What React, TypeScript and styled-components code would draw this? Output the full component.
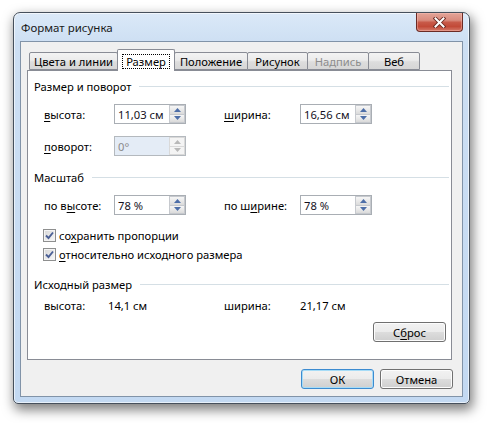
import React from "react";
import styled, { createGlobalStyle } from "styled-components";

const Global = createGlobalStyle`
  html, body { margin: 0; padding: 0; background: #ffffff; }
  body {
    font-family: "Noto Sans", "Open Sans", "DejaVu Sans", sans-serif;
    font-size: 11.2px;
    color: #000000;
  }
  * { box-sizing: border-box; }
`;

const Page = styled.div`
  width: 487px;
  height: 423px;
  padding: 12px 0 0 13px;
`;

const Window = styled.div`
  width: 457px;
  height: 392px;
  border: 1px solid #46505c;
  border-radius: 7px 7px 5px 5px;
  background: linear-gradient(to bottom, #dbe9f8 0px, #cddff3 30px, #c3d9f2 100%);
  box-shadow: 2px 5px 12px 1px rgba(0, 0, 0, 0.5), inset 0 0 0 1px rgba(255, 255, 255, 0.6);
  display: flex;
  flex-direction: column;
  padding: 0 6px 6px 6px;
`;

const TitleBar = styled.div`
  height: 28px;
  display: flex;
  align-items: center;
  justify-content: space-between;
`;

const Title = styled.div`
  padding-left: 1px;
  color: #1a1a1a;
  font-size: 11.5px;
`;

const CloseButton = styled.div`
  align-self: flex-start;
  width: 47px;
  height: 19px;
  border: 1px solid #6b2b25;
  border-top: none;
  border-radius: 0 0 4px 4px;
  background: linear-gradient(
    to bottom,
    #e3a498 0%,
    #d98c7e 40%,
    #c85a49 52%,
    #c24a38 75%,
    #d47a6a 100%
  );
  box-shadow: inset 0 0 0 1px rgba(255, 200, 190, 0.4);
  display: flex;
  align-items: center;
  justify-content: center;
`;

const Client = styled.div`
  flex: 1;
  border: 1px solid #8193a8;
  background: #f0f0f0;
  padding: 7px 10px 0 6px;
  display: flex;
  flex-direction: column;
`;

const TabRow = styled.div`
  height: 21px;
  padding-left: 2px;
  display: flex;
  align-items: flex-end;
`;

const Tab = styled.div<{ $w: number; $active?: boolean; $disabled?: boolean }>`
  width: ${(p) => p.$w}px;
  height: ${(p) => (p.$active ? 22 : 18)}px;
  margin-left: -1px;
  margin-bottom: ${(p) => (p.$active ? -1 : 0)}px;
  &:first-child { margin-left: 0; }
  position: relative;
  z-index: ${(p) => (p.$active ? 2 : 1)};
  border: 1px solid #898c95;
  border-bottom: ${(p) => (p.$active ? "none" : "1px solid #898c95")};
  border-radius: 2px 2px 0 0;
  background: ${(p) =>
    p.$active
      ? "#ffffff"
      : "linear-gradient(to bottom, #f3f3f3 0%, #ebebeb 45%, #dddddd 55%, #d6d6d6 100%)"};
  color: ${(p) => (p.$disabled ? "#8d8d8d" : "#000000")};
  display: flex;
  align-items: center;
  justify-content: center;
  padding-top: ${(p) => (p.$active ? 1 : 0)}px;
  white-space: nowrap;
`;

const Focus = styled.span`
  border: 1px dotted #000000;
  padding: 0 3px;
  line-height: 13px;
`;

const Panel = styled.div`
  height: 290px;
  border: 1px solid #898c95;
  background: #ffffff;
  display: flex;
  flex-direction: column;
  padding-top: 7px;
`;

const Section = styled.div<{ $mt: number }>`
  margin-top: ${(p) => p.$mt}px;
  display: flex;
  flex-direction: column;
`;

const SectionHeader = styled.div`
  height: 16px;
  display: flex;
  align-items: center;
  padding-left: 6px;
  padding-right: 2px;
  gap: 8px;
  white-space: nowrap;
  &::after {
    content: "";
    flex: 1;
    height: 1px;
    background: #d5dfe5;
  }
`;

const SectionBody = styled.div<{ $mt: number; $gap: number }>`
  margin-top: ${(p) => p.$mt}px;
  display: flex;
  flex-direction: column;
  gap: ${(p) => p.$gap}px;
`;

const FieldRow = styled.div`
  display: grid;
  grid-template-columns: 70px 72px 38px 76px 72px;
  align-items: center;
  height: 20px;
  padding-left: 16px;
`;

const CheckGroup = styled.div`
  margin-top: 11px;
  display: flex;
  flex-direction: column;
`;

const Label = styled.div`
  color: #000000;
  white-space: nowrap;
`;

const Acc = styled.span`
  text-decoration: underline;
  text-underline-offset: 2px;
  text-decoration-thickness: 1px;
`;

const SpinBox = styled.div<{ $disabled?: boolean }>`
  width: 72px;
  height: 20px;
  border: 1px solid ${(p) => (p.$disabled ? "#b4b9be" : "#a9aeb4")};
  background: ${(p) => (p.$disabled ? "#e4ecf6" : "#ffffff")};
  display: flex;
`;

const SpinValue = styled.div<{ $disabled?: boolean }>`
  flex: 1;
  padding-left: 3px;
  display: flex;
  align-items: center;
  color: ${(p) => (p.$disabled ? "#8a8a8a" : "#14101c")};
  white-space: nowrap;
`;

const SpinButtons = styled.div<{ $disabled?: boolean }>`
  width: 16px;
  display: flex;
  flex-direction: column;
  background: ${(p) => (p.$disabled ? "#f4f4f4" : "#ffffff")};
`;

const SpinBtn = styled.div<{ $disabled?: boolean }>`
  flex: 1;
  border: 1px solid ${(p) => (p.$disabled ? "#d9d9d9" : "#c6c9ce")};
  background: ${(p) =>
    p.$disabled
      ? "#f4f4f4"
      : "linear-gradient(to bottom, #f6f6f6 0%, #e9e9e9 50%, #dadada 100%)"};
  display: flex;
  align-items: center;
  justify-content: center;
  & + & { border-top: none; }
`;

const CheckRow = styled.div`
  height: 19px;
  display: flex;
  align-items: center;
  padding-left: 15px;
  gap: 3px;
`;

const CheckBox = styled.div`
  width: 13px;
  height: 13px;
  border: 1px solid #8e8f8f;
  background: linear-gradient(135deg, #d6d6d6 0%, #eeeeee 70%, #fafafa 100%);
  box-shadow: inset 0 0 0 1px #f4f4f4;
  display: flex;
  align-items: center;
  justify-content: center;
`;

const StaticRow = styled.div`
  height: 16px;
  display: grid;
  grid-template-columns: 64px 116px 76px auto;
  align-items: center;
  padding-left: 16px;
  white-space: nowrap;
`;

const ResetRow = styled.div`
  display: flex;
  justify-content: flex-end;
  padding-right: 5px;
`;

const Button = styled.div<{ $default?: boolean }>`
  width: 73px;
  height: 20px;
  border: 1px solid ${(p) => (p.$default ? "#3c8bd0" : "#707070")};
  border-radius: 3px;
  background: linear-gradient(to bottom, #f2f2f2 0%, #ebebeb 50%, #dddddd 50%, #cfcfcf 100%);
  box-shadow: inset 0 0 0 1px ${(p) => (p.$default ? "#a6dcf7" : "#fcfcfc")};
  display: flex;
  align-items: center;
  justify-content: center;
  white-space: nowrap;
`;

const ButtonRow = styled.div`
  margin-top: 9px;
  margin-right: -1px;
  display: flex;
  justify-content: flex-end;
  gap: 6px;
`;

const UpArrow = ({ disabled }: { disabled?: boolean }) => (
  <svg width="7" height="4" viewBox="0 0 7 4">
    <path d="M0 4 L3.5 0 L7 4 Z" fill={disabled ? "#b8b8b8" : "#4d6ea8"} />
  </svg>
);

const DownArrow = ({ disabled }: { disabled?: boolean }) => (
  <svg width="7" height="4" viewBox="0 0 7 4">
    <path d="M0 0 L7 0 L3.5 4 Z" fill={disabled ? "#b8b8b8" : "#4d6ea8"} />
  </svg>
);

const Spin = ({ value, disabled }: { value: string; disabled?: boolean }) => (
  <SpinBox $disabled={disabled}>
    <SpinValue $disabled={disabled}>{value}</SpinValue>
    <SpinButtons $disabled={disabled}>
      <SpinBtn $disabled={disabled}>
        <UpArrow disabled={disabled} />
      </SpinBtn>
      <SpinBtn $disabled={disabled}>
        <DownArrow disabled={disabled} />
      </SpinBtn>
    </SpinButtons>
  </SpinBox>
);

const Check = () => (
  <CheckBox>
    <svg width="9" height="9" viewBox="0 0 9 9">
      <path d="M1 4.5 L3.5 7 L8 1.5" fill="none" stroke="#4a5f95" strokeWidth="1.9" />
    </svg>
  </CheckBox>
);

const CloseX = () => (
  <svg width="13" height="11" viewBox="0 0 13 11">
    <path d="M2.5 1.5 L10.5 9.5 M10.5 1.5 L2.5 9.5" stroke="#6a2a22" strokeWidth="3.8" strokeLinecap="square" />
    <path d="M2.5 1.5 L10.5 9.5 M10.5 1.5 L2.5 9.5" stroke="#ffffff" strokeWidth="2" strokeLinecap="square" />
  </svg>
);

export default function App() {
  return (
    <>
      <Global />
      <Page>
        <Window>
          <TitleBar>
            <Title>Формат рисунка</Title>
            <CloseButton>
              <CloseX />
            </CloseButton>
          </TitleBar>
          <Client>
            <TabRow>
              <Tab $w={89}>Цвета и линии</Tab>
              <Tab $w={58} $active>
                <Focus>Размер</Focus>
              </Tab>
              <Tab $w={74}>Положение</Tab>
              <Tab $w={61}>Рисунок</Tab>
              <Tab $w={62} $disabled>
                Надпись
              </Tab>
              <Tab $w={52}>Веб</Tab>
            </TabRow>
            <Panel>
              <Section $mt={0}>
                <SectionHeader>Размер и поворот</SectionHeader>
                <SectionBody $mt={10} $gap={12}>
                  <FieldRow>
                    <Label>
                      <Acc>в</Acc>ысота:
                    </Label>
                    <Spin value="11,03 см" />
                    <span />
                    <Label>
                      <Acc>ш</Acc>ирина:
                    </Label>
                    <Spin value="16,56 см" />
                  </FieldRow>
                  <FieldRow>
                    <Label>
                      <Acc>п</Acc>оворот:
                    </Label>
                    <Spin value="0°" disabled />
                  </FieldRow>
                </SectionBody>
              </Section>
              <Section $mt={13}>
                <SectionHeader>Масштаб</SectionHeader>
                <SectionBody $mt={10} $gap={0}>
                  <FieldRow>
                    <Label>
                      по в<Acc>ы</Acc>соте:
                    </Label>
                    <Spin value="78 %" />
                    <span />
                    <Label>
                      по ш<Acc>и</Acc>рине:
                    </Label>
                    <Spin value="78 %" />
                  </FieldRow>
                  <CheckGroup>
                    <CheckRow>
                      <Check />
                      <span>
                        со<Acc>х</Acc>ранить пропорции
                      </span>
                    </CheckRow>
                    <CheckRow>
                      <Check />
                      <span>
                        <Acc>о</Acc>тносительно исходного размера
                      </span>
                    </CheckRow>
                  </CheckGroup>
                </SectionBody>
              </Section>
              <Section $mt={12}>
                <SectionHeader>Исходный размер</SectionHeader>
                <SectionBody $mt={5} $gap={9}>
                  <StaticRow>
                    <span>высота:</span>
                    <span>14,1 см</span>
                    <span>ширина:</span>
                    <span>21,17 см</span>
                  </StaticRow>
                  <ResetRow>
                    <Button>
                      <span>
                        С<Acc>б</Acc>рос
                      </span>
                    </Button>
                  </ResetRow>
                </SectionBody>
              </Section>
            </Panel>
            <ButtonRow>
              <Button $default>ОК</Button>
              <Button>Отмена</Button>
            </ButtonRow>
          </Client>
        </Window>
      </Page>
    </>
  );
}
